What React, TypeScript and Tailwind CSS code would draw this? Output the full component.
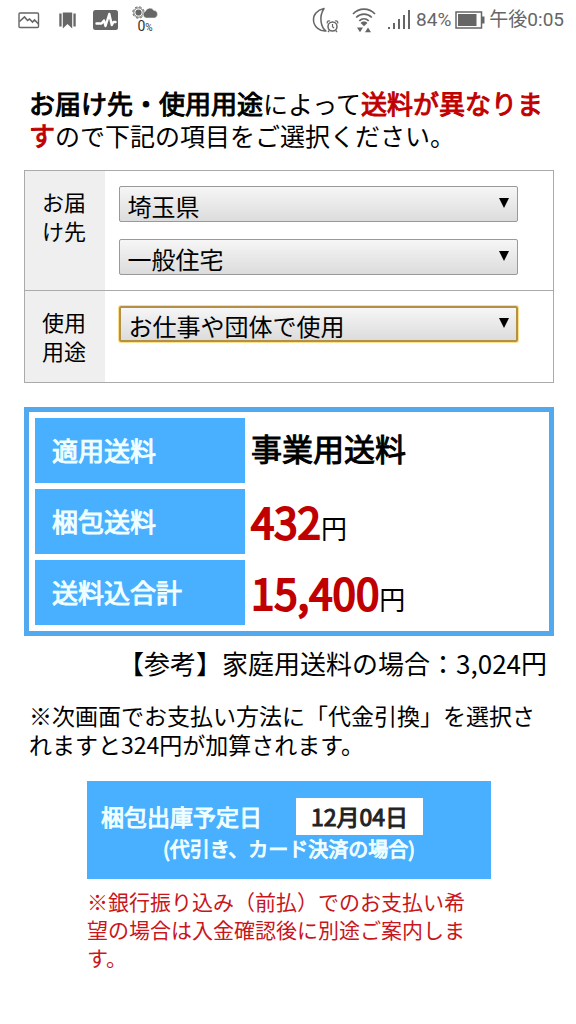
import type { ReactNode } from "react";

function StatusBar() {
  return (
    <header className="flex h-10 items-center justify-between pl-[18px] pr-3 text-[#666]">
      <div className="flex items-center">
        {/* Picture */}
        <svg width="22" height="17" viewBox="0 0 22 17" fill="none" stroke="currentColor">
          <rect x="1" y="1" width="19.5" height="14.5" rx="1" strokeWidth="1.4" />
          <path d="M1.5 9.5 6.500 5l3 3.500 2-1.500 3 3 2-2 4 4" strokeWidth="1.6" />
        </svg>

        {/* Bookmark */}
        <svg className="ml-[19px]" width="17" height="17" viewBox="0 0 17 17" fill="currentColor">
          <path d="M3.8 0.500h9.4v16L8.5 12l-4.7 4.5z" />
          <path d="M0.300 1.5h2.300v13H0.300zM14.4 1.5h2.300v13h-2.300z" />
        </svg>

        {/* Activity */}
        <svg className="ml-[17px]" width="26" height="22" viewBox="0 0 26 22" fill="none">
          <rect x="0" y="1" width="25" height="20" rx="2.5" fill="currentColor" />
          <path
            d="M3.500 14.500h5L11 11.500l1.500 5.500L16.300 5l2.500 11 1.700-3h2"
            stroke="#fff"
            strokeWidth="2.400"
            strokeLinecap="round"
            strokeLinejoin="round"
          />
        </svg>

        {/* Weather */}
        <div className="ml-[13px] flex flex-col items-center">
          <svg width="26" height="13" viewBox="0 0 26 13" fill="none">
            <circle cx="6.500" cy="6.500" r="5.700" stroke="currentColor" strokeWidth="1" strokeDasharray="2.500 1.977" />
            <circle cx="6.500" cy="6.500" r="4.700" stroke="currentColor" strokeWidth="1" />
            <circle cx="6.500" cy="6.500" r="3.100" fill="currentColor" />
            <path
              d="M14 12a3.500 3.500 0 0 1-.6-6.700 4.600 4.600 0 0 1 8.300-1 3.900 3.900 0 0 1 .8 7.700z"
              fill="currentColor"
              stroke="#fff"
              strokeWidth="0.500"
            />
          </svg>
          <span className="text-[14px] leading-[14px] text-[#333]">
            0<span className="text-[10px]">%</span>
          </span>
        </div>
      </div>

      <div className="flex items-center text-[19px] leading-6">
        {/* Do not disturb with alarm */}
        <svg width="28" height="28" viewBox="0 0 28 28" fill="none" stroke="currentColor" strokeWidth="1.500">
          <path d="M12 2.500C5 4 1 9 1.500 14.500 2 21 8 25.500 14 25c-5-3.500-7.500-14-2-22.500z" strokeLinejoin="round" />
          <circle cx="20" cy="20" r="6.500" fill="#fff" stroke="none" />
          <circle cx="20.500" cy="20.500" r="4.500" />
          <path d="M20.500 18v2.800l1.600 1.200M17.300 24.500 16 26M23.700 24.500l1.300 1.500" strokeWidth="1.200" />
          <path d="M15.300 17.500c-.6-2 1-3.200 2.700-2.500M25.700 17.500c.6-2-1-3.200-2.700-2.500" strokeWidth="1.200" />
        </svg>

        {/* Wi-Fi */}
        <svg className="ml-3" width="24" height="26" viewBox="0 0 24 26" fill="none" stroke="currentColor">
          <path d="M1 7c6-6.500 16-6.500 22 0M4.200 10.500c4.400-4.500 11.200-4.500 15.600 0M7.300 13.800c2.800-2.600 6.600-2.600 9.400 0" strokeWidth="1.700" />
          <path d="M8.600 16c2-1.900 4.800-1.900 6.800 0L12 19.300z" fill="currentColor" stroke="none" />
          <path d="M5 20.500h6L8 25.200zM13 25.200h6l-3-4.700z" fill="currentColor" stroke="none" />
        </svg>

        {/* Signal */}
        <svg className="ml-3" width="24" height="20" viewBox="0 0 24 20" fill="currentColor">
          <path d="M0 17h2v2H0zM5 13h2v6H5zM10 9h2v10h-2zM15 5h2v14h-2zM20 0h2v19h-2z" />
        </svg>

        <span className="ml-1">84%</span>

        {/* Battery */}
        <svg className="ml-1" width="30" height="18" viewBox="0 0 30 18" fill="none">
          <rect x="1" y="1" width="25.500" height="16" stroke="currentColor" strokeWidth="1.500" />
          <path d="M3 3h18.500v12H3zM27 5.500h2.500v7H27z" fill="currentColor" />
        </svg>

        <span className="ml-1">午後0:05</span>
      </div>
    </header>
  );
}

function SelectBox({ id, label, options, active }: { id: string; label: string; options: string[]; active?: boolean }) {
  return (
    <div className="relative">
      <select
        id={id}
        aria-label={label}
        className={
          active
            ? "block h-9 w-full appearance-none rounded-[2px] border-2 border-[#b48f45] bg-linear-to-b from-[#f6f6f6] to-[#dcdcdc] pt-1 pl-2 text-[24px] leading-7 text-black shadow-[0_0_0_1px_#fbe08a] outline-none"
            : "block h-9 w-full appearance-none rounded-[2px] border border-[#999] bg-linear-to-b from-[#f6f6f6] to-[#dcdcdc] pt-1 pl-2 text-[24px] leading-7 text-black outline-none"
        }
      >
        {options.map((o) => (
          <option key={o}>{o}</option>
        ))}
      </select>
      <svg className="pointer-events-none absolute top-3 right-[9px]" width="10" height="10" viewBox="0 0 10 10">
        <path d="M0 0h10L5 10z" fill="#000" />
      </svg>
    </div>
  );
}

function PriceRow({ label, children }: { label: string; children: ReactNode }) {
  return (
    <tr className="h-[65px]">
      <th
        scope="row"
        className="w-[210px] bg-[#49afff] pb-[3px] pl-[17px] text-left text-[26px] font-normal text-[#f0ffff] [-webkit-text-stroke:1px]"
      >
        {label}
      </th>
      {children}
    </tr>
  );
}

export default function App() {
  return (
    <div className="min-h-screen bg-white font-[Roboto,'Noto_Sans_CJK_JP',sans-serif] text-black">
      <StatusBar />

      <main lang="ja" className="pt-[47px] pr-[22px] pb-12 pl-6 font-['Noto_Sans_CJK_JP',sans-serif]">
        <p className="pl-[5px] text-[25px] leading-[31px]">
          <span className="text-[26px] [-webkit-text-stroke:1px]">お届け先・使用用途</span>によって
          <span className="text-[26px] text-[#c00000] [-webkit-text-stroke:1px]">送料が異なります</span>
          ので下記の項目をご選択ください。
        </p>

        {/* Destination and purpose */}
        <table className="mt-[19px] w-full border-collapse border border-[#aaa]">
          <tbody>
            <tr className="h-[120px] border-b border-[#aaa]">
              <th scope="row" className="w-20 bg-[#efefef] px-[17px] pt-4 text-left align-top text-[22px] leading-[29px] font-normal">
                <label htmlFor="prefecture">お届け先</label>
              </th>
              <td className="pt-[15px] pr-[35px] pl-[14px] align-top">
                <div className="flex flex-col gap-[17px]">
                  <SelectBox id="prefecture" label="お届け先" options={["埼玉県"]} />
                  <SelectBox id="building" label="お届け先" options={["一般住宅"]} />
                </div>
              </td>
            </tr>
            <tr className="h-[92px]">
              <th scope="row" className="bg-[#efefef] px-[17px] pt-4 text-left align-top text-[22px] leading-[29px] font-normal">
                <label htmlFor="purpose">使用用途</label>
              </th>
              <td className="pt-[15px] pr-[35px] pl-[14px] align-top">
                <SelectBox id="purpose" label="使用用途" options={["お仕事や団体で使用"]} active />
              </td>
            </tr>
          </tbody>
        </table>

        {/* Shipping cost */}
        <table className="mt-6 w-full border-separate border-spacing-[6px] border-[5px] border-[#52a9ee]">
          <tbody>
            <PriceRow label="適用送料">
              <td className="pb-[6px] text-[31px] leading-[52px] [-webkit-text-stroke:1px]">事業用送料</td>
            </PriceRow>
            <PriceRow label="梱包送料">
              <td className="pt-[6px] text-[26px] leading-[52px]">
                <span className="text-[42px] text-[#c00000] [-webkit-text-stroke:2px]">432</span>円
              </td>
            </PriceRow>
            <PriceRow label="送料込合計">
              <td className="pt-[6px] text-[26px] leading-[52px]">
                <span className="text-[42px] text-[#c00000] [-webkit-text-stroke:2px]">15,400</span>円
              </td>
            </PriceRow>
          </tbody>
        </table>
        <p className="mt-[11px] pr-[7px] text-right text-[26px] leading-8">【参考】家庭用送料の場合：3,024円</p>

        <p className="mt-[22px] pl-[5px] text-[23px] leading-[29px]">
          ※次画面でお支払い方法に「代金引換」を選択されますと324円が加算されます。
        </p>

        {/* Shipping date */}
        <div className="mx-auto mt-[22px] w-[404px] max-w-full">
          <div className="h-[98px] bg-[#49afff] pt-[17px] pl-[14px] text-[#f0ffff] [-webkit-text-stroke:1px]">
            <div className="flex items-center text-[23px] leading-[37px]">
              <span>梱包出庫予定日</span>
              <span className="ml-[34px] bg-white px-[15px] text-[#222]">12月04日</span>
            </div>
            <p className="pl-[62px] text-[20px] leading-7">(代引き、カード決済の場合)</p>
          </div>
          <p className="mt-2 pr-4 text-[21px] leading-7 text-[#c8161d]">
            ※銀行振り込み（前払）でのお支払い希望の場合は入金確認後に別途ご案内します。
          </p>
        </div>
      </main>
    </div>
  );
}
